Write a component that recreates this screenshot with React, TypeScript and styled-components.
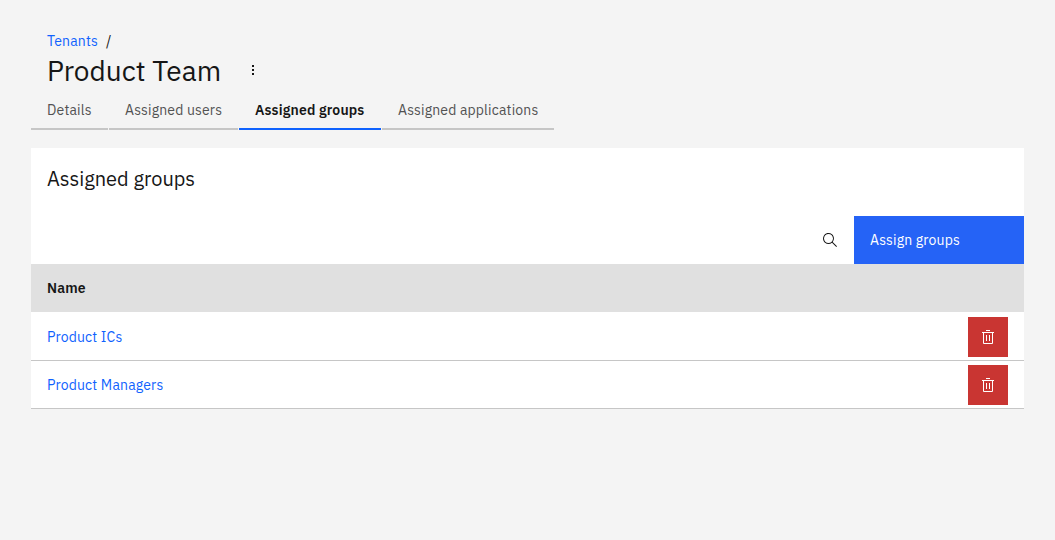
import React from "react";
import styled, { createGlobalStyle } from "styled-components";

const GlobalStyle = createGlobalStyle`
  *, *::before, *::after { box-sizing: border-box; }
  body {
    margin: 0;
    background: #f4f4f4;
    color: #161616;
    font-family: "IBM Plex Sans", Roboto, "Liberation Sans", sans-serif;
    font-size: 14px;
    line-height: 18px;
    letter-spacing: 0.16px;
  }
  button { font: inherit; letter-spacing: inherit; border: 0; margin: 0; cursor: pointer; }
`;

const Page = styled.main`
  padding: 32px 31px;
`;

const Link = styled.a`
  color: #0f62fe;
  text-decoration: none;
  &:hover { text-decoration: underline; }
`;

const Breadcrumb = styled.nav`
  display: flex;
  gap: 8px;
  padding: 0 16px;
`;

const TitleRow = styled.div`
  display: flex;
  align-items: center;
  gap: 12px;
  height: 40px;
  padding: 0 16px;
`;

const Title = styled.h1`
  margin: 0;
  padding-top: 2px;
  font-size: 28px;
  line-height: 36px;
  font-weight: 400;
  letter-spacing: 0;
`;

const IconButton = styled.button<{ $size: number }>`
  display: inline-flex;
  align-items: center;
  justify-content: center;
  width: ${(p) => p.$size}px;
  height: ${(p) => p.$size}px;
  padding: 0;
  background: transparent;
  color: #161616;
`;

const DangerButton = styled(IconButton)`
  background: #c93532;
  color: #fff;
`;

const Tabs = styled.div`
  display: grid;
  grid-template-columns: 77px 129px 142px 172px;
  gap: 1px;
`;

const Tab = styled.button<{ $active: boolean }>`
  height: 40px;
  padding: 2px 0 0 16px;
  text-align: left;
  white-space: nowrap;
  background: transparent;
  border-bottom: 2px solid ${(p) => (p.$active ? "#0f62fe" : "#c6c6c6")};
  color: ${(p) => (p.$active ? "#161616" : "#525252")};
  font-weight: ${(p) => (p.$active ? 600 : 400)};
`;

const Panel = styled.section`
  margin-top: 18px;
  background: #fff;
`;

const PanelTitle = styled.h2`
  margin: 0;
  padding: 17px 16px 23px;
  font-size: 20px;
  line-height: 28px;
  font-weight: 400;
  letter-spacing: 0;
`;

const Toolbar = styled.div`
  display: flex;
  justify-content: flex-end;
`;

const PrimaryButton = styled.button`
  width: 170px;
  height: 48px;
  padding: 0 16px;
  text-align: left;
  background: #2563f6;
  color: #fff;
`;

const Table = styled.table`
  width: 100%;
  border-spacing: 0;
  border-collapse: separate;
`;

const HeadCell = styled.th`
  height: 48px;
  padding: 0 16px;
  text-align: left;
  font-weight: 600;
  background: #e0e0e0;
`;

const Cell = styled.td<{ $end?: boolean }>`
  height: 48px;
  padding: 0 16px;
  text-align: ${(p) => (p.$end ? "right" : "left")};
  border-bottom: 1px solid #c6c6c6;
  tr:first-child > & { height: 49px; border-top: 1px solid #fff; }
  > * { vertical-align: middle; }
`;

const MenuIcon = () => (
  <svg width="16" height="16" viewBox="0 0 16 16" fill="currentColor" aria-hidden="true">
    <path d="M7 3h2v2H7zM7 7h2v2H7zM7 11h2v2H7z" />
  </svg>
);

const SearchIcon = () => (
  <svg width="16" height="16" viewBox="0 0 16 16" fill="currentColor" aria-hidden="true">
    <path d="M15 14.3L10.7 10c1.9-2.3 1.6-5.8-.7-7.7S4.2.7 2.3 3 .7 8.8 3 10.7c2 1.7 5 1.7 7 0l4.3 4.3.7-.7zM2 6.5C2 4 4 2 6.5 2S11 4 11 6.5 9 11 6.5 11 2 9 2 6.5z" />
  </svg>
);

const TrashIcon = () => (
  <svg width="16" height="16" viewBox="0 0 32 32" fill="currentColor" aria-hidden="true">
    <path d="M12 12h2v12h-2zM18 12h2v12h-2z" />
    <path d="M4 6v2h2v20a2 2 0 0 0 2 2h16a2 2 0 0 0 2-2V8h2V6zm4 22V8h16v20zM12 2h8v2h-8z" />
  </svg>
);

const tabs = ["Details", "Assigned users", "Assigned groups", "Assigned applications"];
const groups = ["Product ICs", "Product Managers"];

export default function App() {
  return (
    <Page>
      <GlobalStyle />
      <Breadcrumb aria-label="Breadcrumb">
        <Link href="#tenants">Tenants</Link>
        <span aria-hidden="true">/</span>
      </Breadcrumb>
      <TitleRow>
        <Title>Product Team</Title>
        <IconButton type="button" $size={40} aria-label="Open tenant menu">
          <MenuIcon />
        </IconButton>
      </TitleRow>
      <Tabs role="tablist">
        {tabs.map((name) => (
          <Tab
            key={name}
            type="button"
            role="tab"
            aria-selected={name === "Assigned groups"}
            $active={name === "Assigned groups"}
          >
            {name}
          </Tab>
        ))}
      </Tabs>
      <Panel>
        <PanelTitle>Assigned groups</PanelTitle>
        <Toolbar>
          <IconButton type="button" $size={48} aria-label="Search">
            <SearchIcon />
          </IconButton>
          <PrimaryButton type="button">Assign groups</PrimaryButton>
        </Toolbar>
        <Table>
          <thead>
            <tr>
              <HeadCell scope="col">Name</HeadCell>
              <HeadCell as="td" />
            </tr>
          </thead>
          <tbody>
            {groups.map((name) => (
              <tr key={name}>
                <Cell>
                  <Link href="#group">{name}</Link>
                </Cell>
                <Cell $end>
                  <DangerButton type="button" $size={40} aria-label={`Remove ${name}`}>
                    <TrashIcon />
                  </DangerButton>
                </Cell>
              </tr>
            ))}
          </tbody>
        </Table>
      </Panel>
    </Page>
  );
}
